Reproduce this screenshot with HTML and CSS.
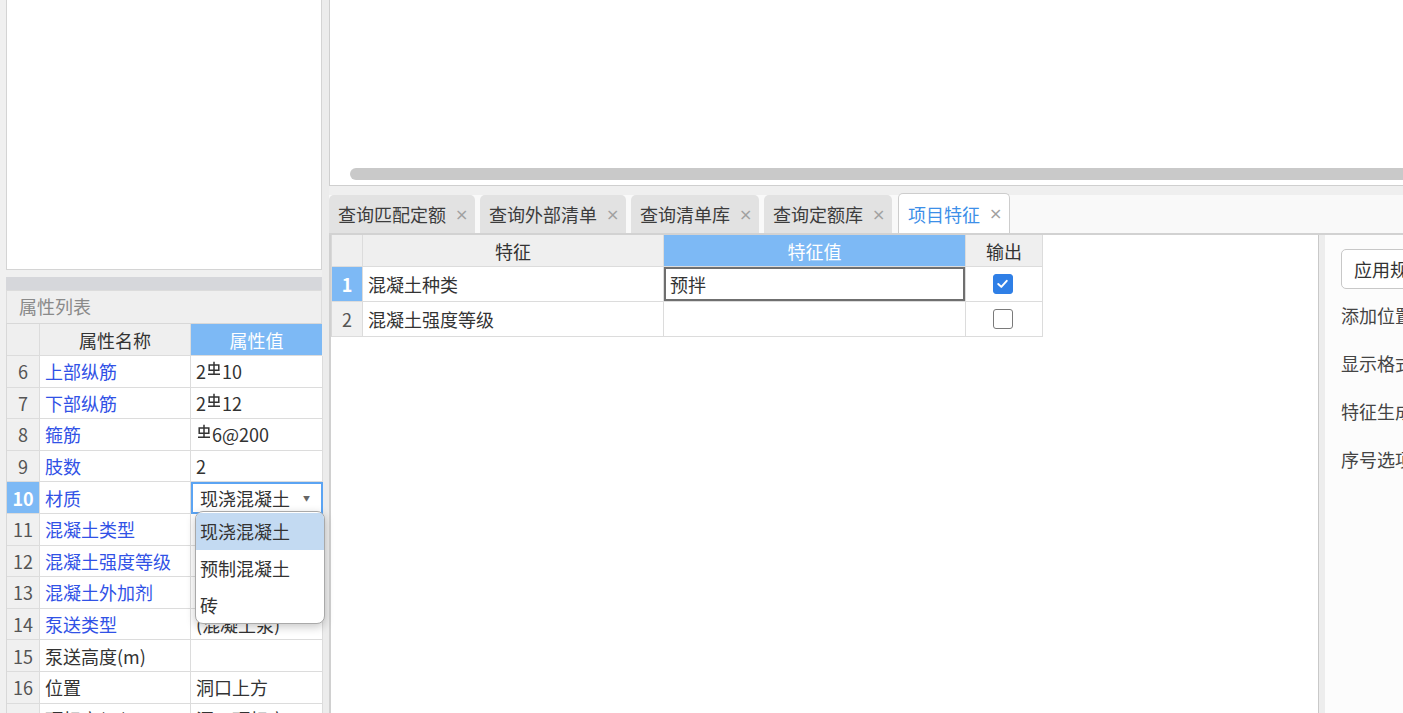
FILE: index.html
```html
<!DOCTYPE html>
<html lang="zh">
<head>
<meta charset="utf-8">
<title>项目特征</title>
<link rel="stylesheet" href="styles.css">
</head>
<body>
<div class="app">
  <div class="left">
    <div class="preview"></div>
    <div class="grip"></div>
    <div class="title">属性列表</div>
    <div class="props">
      <div class="c num head"></div>
      <div class="c head">属性名称</div>
      <div class="c head sel-head">属性值</div>

      <div class="c num">6</div>
      <div class="c name link">上部纵筋</div>
      <div class="c val">2<svg class="rebar" viewBox="0 0 14 16"><path d="M7 0.8V13M2.2 4H11.8V9.2H2.2Z M1 13.2H13"/></svg>10</div>

      <div class="c num">7</div>
      <div class="c name link">下部纵筋</div>
      <div class="c val">2<svg class="rebar" viewBox="0 0 14 16"><path d="M7 0.8V13M2.2 4H11.8V9.2H2.2Z M1 13.2H13"/></svg>12</div>

      <div class="c num">8</div>
      <div class="c name link">箍筋</div>
      <div class="c val"><svg class="rebar" viewBox="0 0 14 16"><path d="M7 0.8V13M2.2 4H11.8V9.2H2.2Z M1 13.2H13"/></svg>6@200</div>

      <div class="c num">9</div>
      <div class="c name link">肢数</div>
      <div class="c val">2</div>

      <div class="c num cur">10</div>
      <div class="c name link">材质</div>
      <div class="c val editing">
        <span>现浇混凝土</span><span class="caret">▼</span>
        <div class="dropdown">
          <div class="opt hl">现浇混凝土</div>
          <div class="opt">预制混凝土</div>
          <div class="opt">砖</div>
        </div>
      </div>

      <div class="c num">11</div>
      <div class="c name link">混凝土类型</div>
      <div class="c val"></div>

      <div class="c num">12</div>
      <div class="c name link">混凝土强度等级</div>
      <div class="c val"></div>

      <div class="c num">13</div>
      <div class="c name link">混凝土外加剂</div>
      <div class="c val"></div>

      <div class="c num">14</div>
      <div class="c name link">泵送类型</div>
      <div class="c val">(混凝土泵)</div>

      <div class="c num">15</div>
      <div class="c name">泵送高度(m)</div>
      <div class="c val"></div>

      <div class="c num">16</div>
      <div class="c name">位置</div>
      <div class="c val">洞口上方</div>

      <div class="c num">17</div>
      <div class="c name">顶标高(m)</div>
      <div class="c val">洞口顶标高</div>
    </div>
  </div>
  <div class="gutter"></div>
  <div class="right">
    <div class="canvas"><div class="thumb"></div></div>
    <div class="band"></div>
    <div class="tabs">
      <div class="tab">查询匹配定额<span class="x">×</span></div>
      <div class="tab">查询外部清单<span class="x">×</span></div>
      <div class="tab">查询清单库<span class="x">×</span></div>
      <div class="tab">查询定额库<span class="x">×</span></div>
      <div class="tab active">项目特征<span class="x">×</span></div>
    </div>
    <div class="content">
      <div class="main">
        <div class="feat">
          <div class="f num head"></div>
          <div class="f head">特征</div>
          <div class="f head sel-head">特征值</div>
          <div class="f head">输出</div>

          <div class="f num cur">1</div>
          <div class="f">混凝土种类</div>
          <div class="f edit">预拌</div>
          <div class="f center"><span class="cb on"><svg viewBox="0 0 20 20"><path d="M5 10.5L8.6 14L15 6.8"/></svg></span></div>

          <div class="f num">2</div>
          <div class="f">混凝土强度等级</div>
          <div class="f"></div>
          <div class="f center"><span class="cb"></span></div>
        </div>
      </div>
      <div class="divider"></div>
      <div class="side">
        <div class="btn">应用规则到所选清单</div>
        <div class="lbl">添加位置：</div>
        <div class="lbl">显示格式：</div>
        <div class="lbl">特征生成方式：</div>
        <div class="lbl">序号选项：</div>
      </div>
    </div>
  </div>
</div>
</body>
</html>
```
FILE: styles.css
```css
* { box-sizing: border-box; }
html, body {
  margin: 0;
  width: 1403px;
  height: 713px;
  overflow: hidden;
}
body {
  background: #f0f0f0;
  font-family: "Noto Sans CJK SC", "Microsoft YaHei", sans-serif;
  font-size: 18px;
  color: #333;
}
.app {
  display: flex;
  height: 713px;
}

/* left column */
.left {
  flex: none;
  width: 322px;
  padding-left: 6px;
  display: flex;
  flex-direction: column;
}
.preview {
  height: 270px;
  background: #fff;
  border: 1px solid #d4d4d4;
  border-top: none;
  flex: none;
}
.grip {
  margin-top: 7px;
  height: 13px;
  background: #d6d7db;
  flex: none;
}
.title {
  height: 33px;
  background: #efefef;
  border: 1px solid #dcdcdc;
  border-bottom: none;
  color: #8a8a8a;
  padding-left: 12px;
  line-height: 31px;
  flex: none;
}
.props {
  display: grid;
  grid-template-columns: 33px 151px 132px;
  grid-template-rows: 32px;
  grid-auto-rows: 31.6px;
  border-top: 1px solid #d8d8d8;
  border-left: 1px solid #d8d8d8;
  background: #fff;
}
.c {
  border-right: 1px solid #dcdcdc;
  border-bottom: 1px solid #dcdcdc;
  display: flex;
  align-items: center;
  white-space: nowrap;
  line-height: 1;
}
.c.head {
  background: #efefef;
  justify-content: center;
  color: #333;
}
.sel-head {
  background: #7db9f5 !important;
  color: #fff !important;
}
.num {
  background: #f0f0f0;
  justify-content: center;
  color: #555;
}
.num.cur {
  background: #7db9f5;
  color: #fff;
  font-weight: bold;
}
.name { padding-left: 5px; }
.link { color: #3152e6; }
.val { padding-left: 5px; position: relative; }
.rebar {
  width: 14px;
  height: 16px;
  margin: 0 1px 0 1px;
  position: relative;
  top: -2px;
}
.rebar path {
  fill: none;
  stroke: #333;
  stroke-width: 1.5;
}
.val.editing {
  border: 2px solid #5ba4f3;
  padding-left: 7px;
}
.caret {
  font-size: 7px;
  color: #666;
  margin-left: 13px;
}
.dropdown {
  position: absolute;
  top: 27px;
  left: 2px;
  width: 130px;
  height: 113px;
  background: #fff;
  border: 1px solid #a9a9a9;
  border-radius: 8px;
  box-shadow: 0 3px 10px rgba(0, 0, 0, 0.22);
  padding: 1px 0;
  z-index: 5;
  overflow: hidden;
}
.opt {
  height: 37px;
  display: flex;
  align-items: center;
  padding-left: 4px;
  color: #333;
  padding-bottom: 2px;
}
.opt.hl { background: #c3daf2; }

/* gutter */
.gutter {
  flex: none;
  width: 7px;
  background: #ececec;
}

/* right column */
.right {
  flex: 1;
  min-width: 0;
  display: flex;
  flex-direction: column;
}
.canvas {
  flex: none;
  height: 186px;
  background: #fff;
  border-left: 1px solid #cfcfcf;
  border-bottom: 1px solid #cfcfcf;
  display: flex;
  align-items: flex-end;
  padding: 0 0 5px 20px;
}
.thumb {
  flex: 1;
  height: 12px;
  border-radius: 6px;
  background: #c9c9c9;
  margin-right: -10px;
}
.band {
  flex: none;
  height: 9px;
  background: #efefef;
}
.tabs {
  flex: none;
  height: 40px;
  display: flex;
  gap: 5px;
  align-items: flex-end;
  border-bottom: 2px solid #d2d2d2;
  background: #f9f9f9;
}
.tab {
  height: 38px;
  background: #e2e2e2;
  border-radius: 5px 5px 0 0;
  padding: 0 9px 0 9px;
  display: flex;
  align-items: center;
  white-space: nowrap;
  color: #3c3c3c;
}
.tab .x {
  color: #a0a0a0;
  font-size: 16px;
  margin-left: 9px;
  width: 10px;
  margin-right: 1px;
  font-family: "DejaVu Sans", sans-serif;
}
.tab.active {
  height: 40px;
  background: #fff;
  border: 1px solid #cdcdcd;
  border-bottom: none;
  color: #3d8fe8;
  margin-left: 1px;
  width: 112px;
}
.content {
  flex: 1;
  display: flex;
  min-height: 0;
}
.main {
  flex: none;
  width: 989px;
  background: #fff;
  border-left: 2px solid #d0d0d0;
}
.feat {
  display: grid;
  grid-template-columns: 31px 301px 302px 77px;
  grid-template-rows: 32px 35px 35px;
  width: 711px;
  border-left: 1px solid #d8d8d8;
}
.f {
  border-right: 1px solid #dcdcdc;
  border-bottom: 1px solid #dcdcdc;
  display: flex;
  align-items: center;
  padding-left: 5px;
  white-space: nowrap;
  line-height: 1;
}
.f.head {
  background: #efefef;
  justify-content: center;
  padding-left: 0;
}
.f.num { padding-left: 0; }
.f.center { justify-content: center; padding-left: 0; }
.f.edit {
  box-shadow: inset 0 0 0 2px #6f6f6f;
  padding-left: 6px;
}
.cb {
  width: 20px;
  height: 20px;
  border-radius: 3px;
  border: 1.5px solid #7a7a7a;
  background: #fff;
  display: block;
  margin-left: -2px;
}
.cb.on {
  background: #2f7fe6;
  border-color: #2f7fe6;
}
.cb svg {
  width: 17px;
  height: 17px;
  display: block;
}
.cb svg path {
  fill: none;
  stroke: #fff;
  stroke-width: 2.3;
  stroke-linecap: round;
  stroke-linejoin: round;
}
.divider {
  flex: none;
  width: 7px;
  background: #ededed;
  border-left: 1px solid #c9c9c9;
}
.side {
  flex: 1;
  min-width: 0;
  background: #fcfcfc;
  padding: 14px 0 0 16px;
  white-space: nowrap;
  overflow: hidden;
}
.btn {
  height: 40px;
  border: 1px solid #c8c8c8;
  border-radius: 5px;
  background: #fff;
  padding-left: 12px;
  display: flex;
  align-items: center;
  width: 200px;
  margin-bottom: 17px;
}
.lbl {
  height: 48px;
  line-height: 1;
  color: #444;
}
```
